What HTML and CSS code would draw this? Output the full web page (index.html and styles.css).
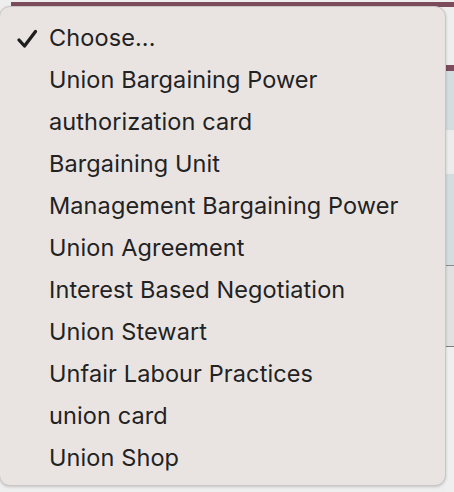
FILE: index.html
```html
<!DOCTYPE html>
<html>
<head>
<meta charset="utf-8">
<link rel="stylesheet" href="styles.css">
</head>
<body>
<div class="page">
  <div class="topbar"></div>
  <div class="side">
    <div class="s-gap1"></div>
    <div class="s-maroon"></div>
    <div class="s-blue1"></div>
    <div class="s-light1"></div>
    <div class="s-blue2"></div>
    <div class="s-gray"></div>
    <div class="s-light2"></div>
  </div>
</div>
<div class="menu">
  <div class="item selected">
    <svg class="check" width="22" height="20" viewBox="0 0 22 20"><path d="M3 11 L8.5 17 L19.5 2.5" fill="none" stroke="#1e1e1e" stroke-width="3.3" stroke-linecap="round" stroke-linejoin="round"/></svg>
    <span>Choose...</span>
  </div>
  <div class="item"><span>Union Bargaining Power</span></div>
  <div class="item"><span>authorization card</span></div>
  <div class="item"><span>Bargaining Unit</span></div>
  <div class="item"><span>Management Bargaining Power</span></div>
  <div class="item"><span>Union Agreement</span></div>
  <div class="item"><span>Interest Based Negotiation</span></div>
  <div class="item"><span>Union Stewart</span></div>
  <div class="item"><span>Unfair Labour Practices</span></div>
  <div class="item"><span>union card</span></div>
  <div class="item"><span>Union Shop</span></div>
</div>
</body>
</html>
```
FILE: styles.css
```css
html, body {
  margin: 0;
  padding: 0;
}
body {
  width: 454px;
  height: 492px;
  overflow: hidden;
  background: #efeeee;
  position: relative;
  font-family: "Inter", "Liberation Sans", sans-serif;
}
.page {
  height: 492px;
  display: flex;
  flex-direction: column;
  position: relative;
}
.topbar {
  margin-top: 2px;
  margin-left: 11px;
  height: 5px;
  background: #7c4b5c;
}
.side {
  position: absolute;
  top: 7px;
  right: 0;
  width: 8px;
  display: flex;
  flex-direction: column;
}
.s-gap1 { height: 58px; background: #eeeeee; }
.s-maroon { height: 6px; background: #7c4b5c; }
.s-blue1 { height: 59px; background: #d3dddf; }
.s-light1 { height: 44px; background: #ececec; }
.s-blue2 { height: 91px; background: #d3dddf; border-bottom: 1px solid #8a8a8a; }
.s-gray { height: 80px; background: #e1e1e1; border-bottom: 1px solid #7d7d7d; }
.s-light2 { height: 150px; background: #efefef; }

.menu {
  position: absolute;
  left: -1px;
  top: 6px;
  width: 447px;
  height: 480px;
  box-sizing: border-box;
  background: #e9e4e2;
  border: 1px solid #c9c6c5;
  border-radius: 11px;
  box-shadow: 0 1px 3px rgba(0,0,0,0.18);
  padding-top: 9px;
  display: flex;
  flex-direction: column;
}
.item {
  height: 42px;
  display: flex;
  align-items: center;
  padding-left: 49px;
  position: relative;
  font-size: 23.5px;
  color: #222222;
  letter-spacing: 0.1px;
}
.check {
  position: absolute;
  left: 16px;
  top: 13px;
}
```
